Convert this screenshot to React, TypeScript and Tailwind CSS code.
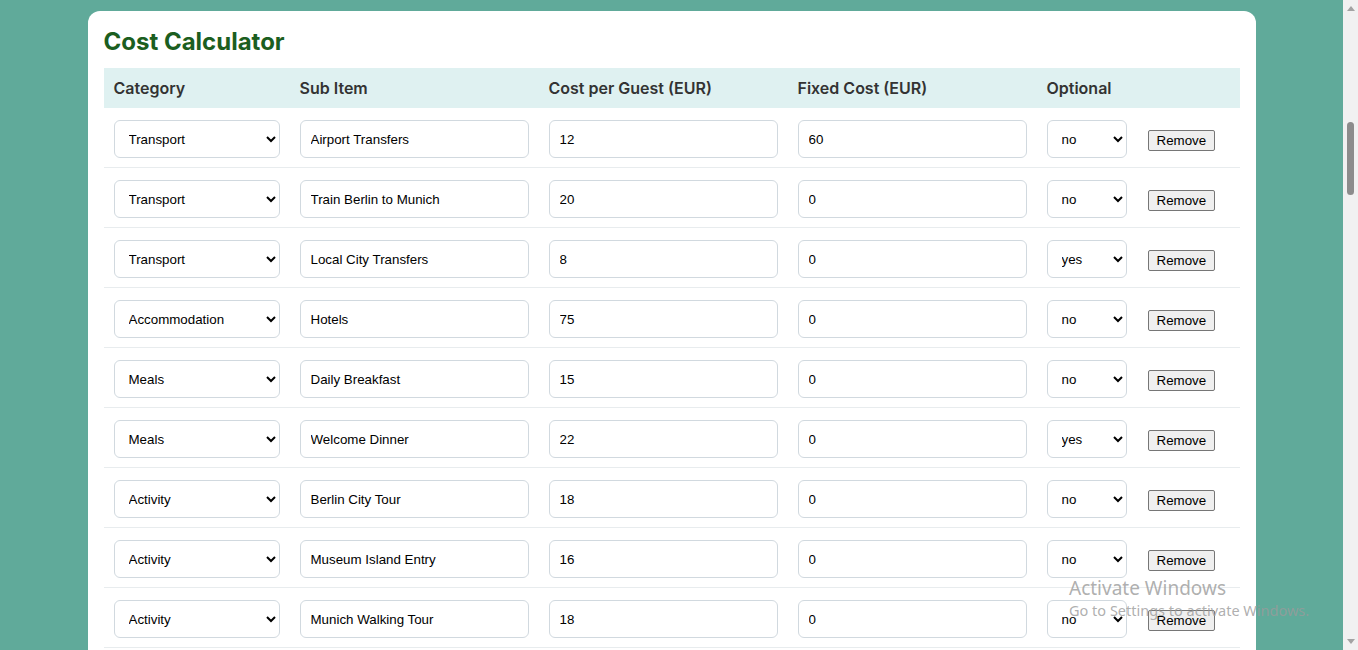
import React from "react";

type Row = { cat: string; sub: string; guest: string; fixed: string; opt: string };

const rows: Row[] = [
  { cat: "Transport", sub: "Airport Transfers", guest: "12", fixed: "60", opt: "no" },
  { cat: "Transport", sub: "Train Berlin to Munich", guest: "20", fixed: "0", opt: "no" },
  { cat: "Transport", sub: "Local City Transfers", guest: "8", fixed: "0", opt: "yes" },
  { cat: "Accommodation", sub: "Hotels", guest: "75", fixed: "0", opt: "no" },
  { cat: "Meals", sub: "Daily Breakfast", guest: "15", fixed: "0", opt: "no" },
  { cat: "Meals", sub: "Welcome Dinner", guest: "22", fixed: "0", opt: "yes" },
  { cat: "Activity", sub: "Berlin City Tour", guest: "18", fixed: "0", opt: "no" },
  { cat: "Activity", sub: "Museum Island Entry", guest: "16", fixed: "0", opt: "no" },
  { cat: "Activity", sub: "Munich Walking Tour", guest: "18", fixed: "0", opt: "no" },
  { cat: "Activity", sub: "Neuschwanstein Trip", guest: "45", fixed: "0", opt: "yes" },
];

const categories = ["Transport", "Accommodation", "Meals", "Activity", "Other"];

const ctrl =
  "w-full h-[38px] border border-[#d1d9df] rounded-[6px] bg-white text-[13.33px] leading-[16px] text-black font-['Liberation_Sans',Arial,sans-serif] outline-none";

export default function App() {
  return (
    <div className="flex h-[650px] w-full overflow-hidden">
      <div className="relative flex-1 bg-[#60aa9a] overflow-hidden">
        <div className="mx-auto mt-[11px] w-[1168px] rounded-[12px] bg-white px-4 pt-4 pb-4">
          <h2 className="mb-3 text-[24px] leading-[29px] font-bold text-[#1b5e20] font-['Inter',sans-serif]">
            Cost Calculator
          </h2>
          <table className="w-full border-collapse table-fixed">
            <colgroup>
              <col className="w-[186px]" />
              <col className="w-[249px]" />
              <col className="w-[249px]" />
              <col className="w-[249px]" />
              <col className="w-[100px]" />
              <col />
            </colgroup>
            <thead>
              <tr className="h-[40px] bg-[#dff1f1]">
                {["Category", "Sub Item", "Cost per Guest (EUR)", "Fixed Cost (EUR)", "Optional", ""].map((h, i) => (
                  <th
                    key={i}
                    className="px-[10px] text-left text-[16px] font-semibold text-[#333333] font-['Inter',sans-serif]"
                  >
                    {h}
                  </th>
                ))}
              </tr>
            </thead>
            <tbody>
              {rows.map((r, i) => (
                <tr key={i} className="border-b border-[#e8ecee]">
                  <td className="px-[10px] pt-3 pb-[9px]">
                    <select defaultValue={r.cat} className={`${ctrl} pl-[10px] pr-[4px]`}>
                      {categories.map((c) => (
                        <option key={c}>{c}</option>
                      ))}
                    </select>
                  </td>
                  <td className="px-[10px] pt-3 pb-[9px]">
                    <input defaultValue={r.sub} className={`${ctrl} px-[10px]`} />
                  </td>
                  <td className="px-[10px] pt-3 pb-[9px]">
                    <input defaultValue={r.guest} className={`${ctrl} px-[10px]`} />
                  </td>
                  <td className="px-[10px] pt-3 pb-[9px]">
                    <input defaultValue={r.fixed} className={`${ctrl} px-[10px]`} />
                  </td>
                  <td className="px-[10px] pt-3 pb-[9px]">
                    <select defaultValue={r.opt} className={`${ctrl} pl-[10px] pr-[4px]`}>
                      <option>no</option>
                      <option>yes</option>
                    </select>
                  </td>
                  <td className="pl-[11px] pr-[10px] pt-3 pb-[9px]">
                    <button className="h-[21px] rounded-[2px] border border-[#767676] bg-[#efefef] px-[8px] text-[13.33px] leading-[17px] text-black font-['Liberation_Sans',Arial,sans-serif]">
                      Remove
                    </button>
                  </td>
                </tr>
              ))}
            </tbody>
          </table>
        </div>
        <div className="pointer-events-none absolute left-[1069px] top-[576px] font-['Noto_Sans',sans-serif] text-[#9a9a9a]/80">
          <div className="text-[19px] leading-[24px]">Activate Windows</div>
          <div className="text-[14.5px] leading-[20px]">Go to Settings to activate Windows.</div>
        </div>
      </div>
      <div className="flex w-[15px] flex-col bg-[#f1f1f1]">
        <div className="flex h-[17px] items-center justify-center">
          <svg width="8" height="5" viewBox="0 0 8 5"><path d="M0 5 L4 0 L8 5 Z" fill="#a3a3a3" /></svg>
        </div>
        <div className="flex-1 px-[4px] pt-[105px]">
          <div className="h-[73px] w-full rounded-full bg-[#8c8c8c]" />
        </div>
        <div className="flex h-[17px] items-center justify-center">
          <svg width="8" height="5" viewBox="0 0 8 5"><path d="M0 0 L8 0 L4 5 Z" fill="#a3a3a3" /></svg>
        </div>
      </div>
    </div>
  );
}
